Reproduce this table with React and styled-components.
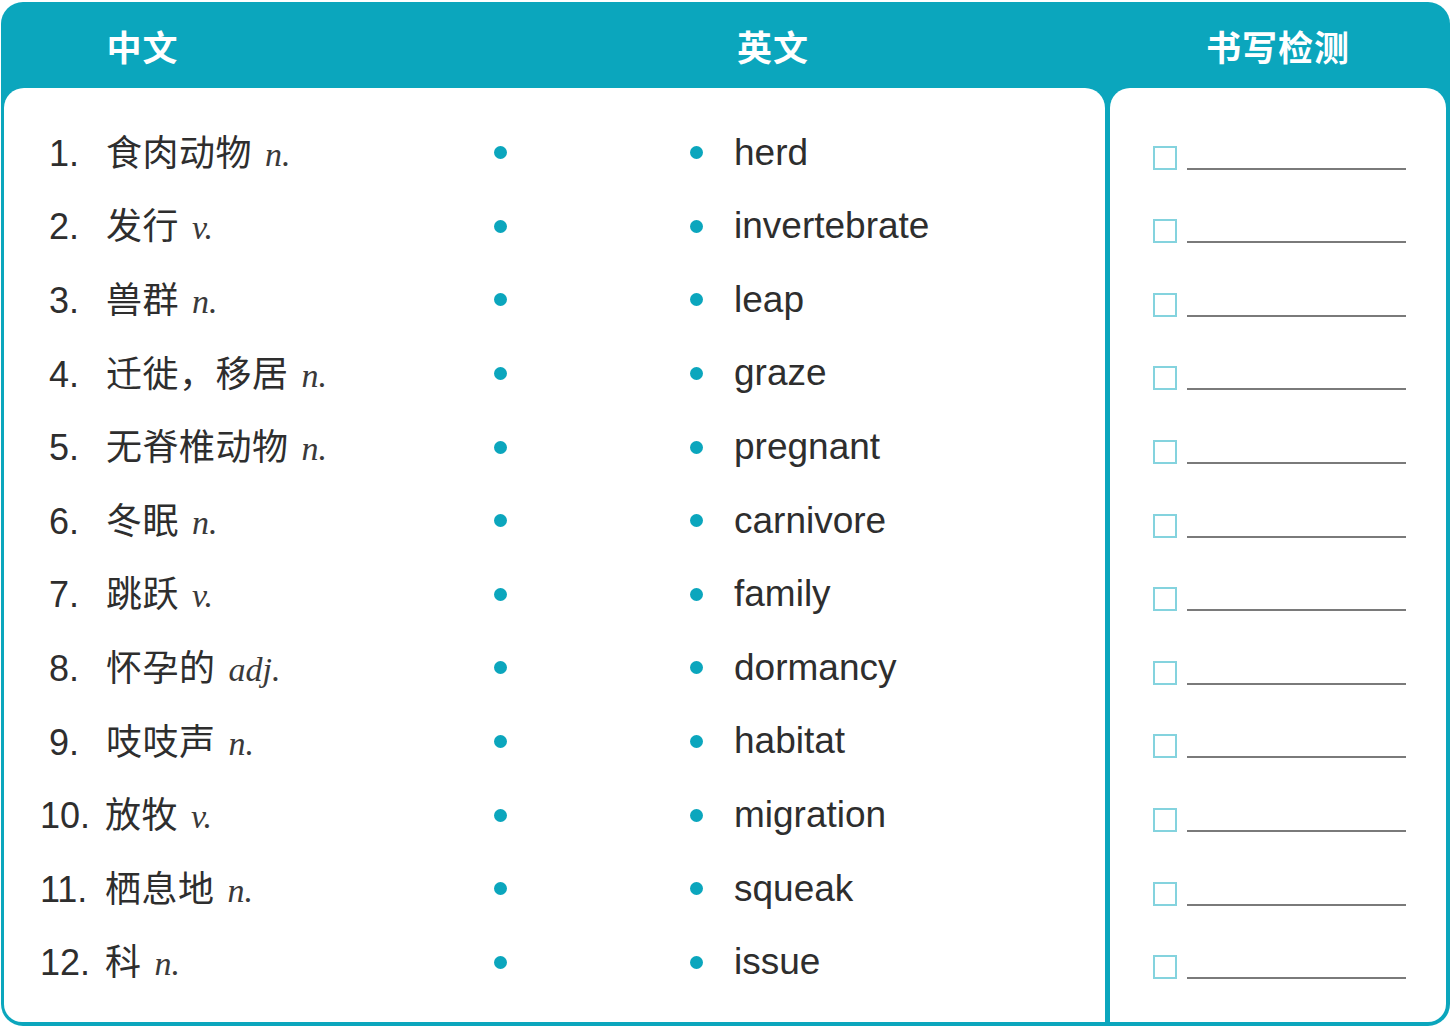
import React from "react";
import styled, { createGlobalStyle } from "styled-components";

const TEAL = "#0ba6bd";

const Global = createGlobalStyle`
  html, body { margin: 0; padding: 0; background: #ffffff; }
  body { font-family: "Liberation Sans", "Noto Sans CJK SC", sans-serif; }
`;

const Frame = styled.div`
  width: 1449px;
  height: 1024px;
  margin: 2px 0 0 1px;
  box-sizing: border-box;
  background: ${TEAL};
  border-radius: 22px;
  padding: 0 4px 4px 3px;
  display: grid;
  grid-template-rows: 86px 1fr;
`;

const HeaderRow = styled.div`
  display: grid;
  grid-template-columns: 1101px 336px;
  column-gap: 5px;
  align-items: center;
`;

const HeaderLeft = styled.div`
  display: grid;
  grid-template-columns: 277px 1fr 664px;
  align-items: center;
`;

const HeadLabel = styled.div`
  color: #ffffff;
  font-family: "Noto Sans CJK SC", sans-serif;
  font-weight: 700;
  font-size: 35px;
  letter-spacing: 1px;
  text-align: center;
  line-height: 1;
`;

const Body = styled.div`
  display: grid;
  grid-template-columns: 1101px 336px;
  column-gap: 5px;
`;

const Panel = styled.div`
  background: #ffffff;
  border-radius: ${(p) => (p.$side === "left" ? "20px 20px 0 18px" : "20px 20px 18px 0")};
  box-sizing: border-box;
  padding: 28px 0 23px;
  display: flex;
  flex-direction: column;
`;

const Row = styled.div`
  height: 73.6px;
  display: grid;
  grid-template-columns: 487px 20px 175px 20px 1fr;
  align-items: center;
`;

const Cn = styled.div`
  display: flex;
  align-items: baseline;
  white-space: nowrap;
  color: #2e2e2e;
  line-height: 1.2;
  margin-bottom: 1px;
`;

const Num = styled.span`
  font-family: "Liberation Sans", sans-serif;
  font-size: 36px;
  margin-left: ${(p) => (p.$wide ? 36 : 45)}px;
  width: ${(p) => (p.$wide ? 65 : 57)}px;
`;

const Word = styled.span`
  font-family: "Noto Sans CJK SC", sans-serif;
  font-size: 36px;
  font-weight: 400;
  letter-spacing: 0.5px;
`;

const Pos = styled.span`
  font-family: "Liberation Serif", serif;
  font-style: italic;
  font-size: 34px;
  color: #3a3a3a;
  margin-left: 13px;
`;

const DotCell = styled.div`
  display: flex;
  justify-content: center;
`;

const Dot = styled.span`
  width: 13px;
  height: 13px;
  border-radius: 50%;
  background: ${TEAL};
  margin-left: ${(p) => p.$shift || 0}px;
`;

const En = styled.div`
  font-family: "Liberation Sans", sans-serif;
  font-size: 37px;
  color: #2e2e2e;
  padding-left: 28px;
  white-space: nowrap;
  line-height: 1.2;
`;

const CheckRow = styled.div`
  height: 73.6px;
  display: flex;
  align-items: flex-end;
  box-sizing: border-box;
  padding: 0 0 20px 43px;
`;

const Box = styled.span`
  width: 24px;
  height: 24px;
  box-sizing: border-box;
  border: 2px solid #84d3de;
`;

const Line = styled.span`
  width: 219px;
  margin-left: 10px;
  border-bottom: 2px solid #7a7a7a;
`;

const rows = [
  ["1.", "食肉动物", "n.", "herd"],
  ["2.", "发行", "v.", "invertebrate"],
  ["3.", "兽群", "n.", "leap"],
  ["4.", "迁徙，移居", "n.", "graze"],
  ["5.", "无脊椎动物", "n.", "pregnant"],
  ["6.", "冬眠", "n.", "carnivore"],
  ["7.", "跳跃", "v.", "family"],
  ["8.", "怀孕的", "adj.", "dormancy"],
  ["9.", "吱吱声", "n.", "habitat"],
  ["10.", "放牧", "v.", "migration"],
  ["11.", "栖息地", "n.", "squeak"],
  ["12.", "科", "n.", "issue"],
];

export default function App() {
  return (
    <>
      <Global />
      <Frame>
        <HeaderRow>
          <HeaderLeft>
            <HeadLabel>中文</HeadLabel>
            <span />
            <HeadLabel>英文</HeadLabel>
          </HeaderLeft>
          <HeadLabel>书写检测</HeadLabel>
        </HeaderRow>
        <Body>
          <Panel $side="left">
            {rows.map(([n, cn, pos, en]) => (
              <Row key={n}>
                <Cn>
                  <Num $wide={n.length > 2}>{n}</Num>
                  <Word>{cn}</Word>
                  <Pos>{pos}</Pos>
                </Cn>
                <DotCell>
                  <Dot $shift={-2} />
                </DotCell>
                <span />
                <DotCell>
                  <Dot />
                </DotCell>
                <En>{en}</En>
              </Row>
            ))}
          </Panel>
          <Panel $side="right">
            {rows.map(([n]) => (
              <CheckRow key={n}>
                <Box />
                <Line />
              </CheckRow>
            ))}
          </Panel>
        </Body>
      </Frame>
    </>
  );
}
